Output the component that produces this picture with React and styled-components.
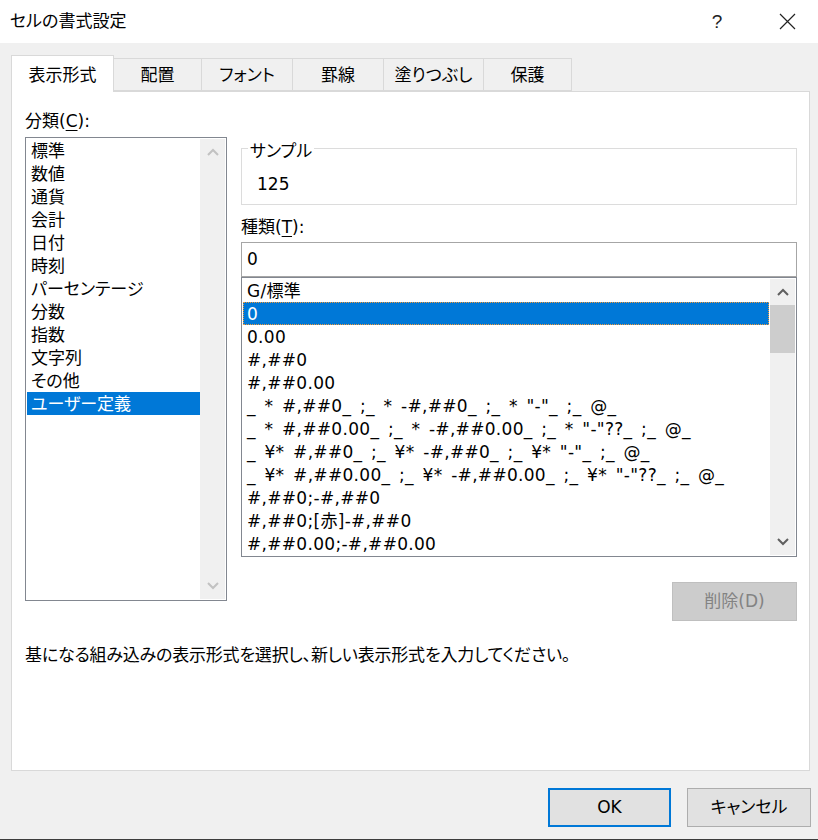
import React from "react"
import styled, { createGlobalStyle } from 'styled-components';

const GlobalStyle = createGlobalStyle`
  html, body {
    margin: 0;
    padding: 0;
    background: #f0f0f0;
  }
  body {
    font-family: "DejaVu Sans", "Noto Sans CJK JP", sans-serif;
    font-size: 17px;
    font-feature-settings: "palt";
    color: #000;
  }
  * { box-sizing: border-box; }
`

const Window = styled.div`
  width: 818px;
  height: 840px;
  display: flex;
  flex-direction: column;
  background: #f0f0f0;
  border-bottom: 1px solid #3c3c3c;
`

const TitleBar = styled.div`
  height: 43px;
  background: #fff;
  display: flex;
  align-items: center;
  padding-left: 10px;
`

const Title = styled.span`
  flex: 1;
  font-size: 17px;
  line-height: 23px;
`

const HelpButton = styled.span`
  width: 20px;
  text-align: center;
  font-family: "Liberation Sans", sans-serif;
  font-size: 19px;
  font-weight: 300;
  color: #222;
  margin-right: 52px;
`

const CloseButton = styled.span`
  display: flex;
  margin-right: 22px;
`

const Body = styled.div`
  padding: 12px 8px 0 11px;
`

const TabRow = styled.div`
  display: flex;
  align-items: flex-end;
  height: 36px;
`

const Tab = styled.div`
  position: relative;
  width: ${p => p.$w}px;
  height: ${p => (p.$active ? 37 : 33)}px;
  margin-left: ${p => (p.$first ? 0 : -1)}px;
  margin-bottom: ${p => (p.$active ? -1 : 0)}px;
  z-index: ${p => (p.$active ? 2 : 1)};
  border: 1px solid #d9d9d9;
  border-bottom: ${p => (p.$active ? 'none' : '1px solid #d9d9d9')};
  background: ${p => (p.$active ? '#fff' : '#f0f0f0')};
  display: flex;
  align-items: center;
  justify-content: center;
  padding-top: ${p => (p.$active ? 2 : 1)}px;
  line-height: 23px;
`

const Panel = styled.div`
  height: 680px;
  background: #fff;
  border: 1px solid #d9d9d9;
  padding: 18px 12px 0 13px;
`

const Columns = styled.div`
  display: flex;
  gap: 14px;
`

const LeftCol = styled.div`
  width: 202px;
  display: flex;
  flex-direction: column;
`

const RightCol = styled.div`
  width: 556px;
  padding-top: 38px;
  display: flex;
  flex-direction: column;
`

const Label = styled.div`
  line-height: 23px;
  height: 23px;
  margin-top: ${p => p.$mt || 0}px;
  margin-bottom: ${p => p.$mb || 0}px;
  u { text-decoration-thickness: 1px; text-underline-offset: 3px; }
`

const ListBox = styled.div`
  height: ${p => p.$h}px;
  border: 1px solid #828790;
  padding: 1px;
  display: flex;
  gap: ${p => p.$gap || 0}px;
  background: #fff;
`

const Items = styled.div`
  flex: 1;
  overflow: hidden;
`

const Row = styled.div`
  height: 23px;
  white-space: pre;
  background: ${p => (p.$sel ? '#0078d7' : 'transparent')};
  color: ${p => (p.$sel ? '#fff' : '#000')};
  border: ${p => (p.$focus ? '1px dotted #f09a3a' : 'none')};
  padding-left: ${p => (p.$focus ? 3 : 4)}px;
  padding-top: ${p => (p.$focus ? 1 : 2)}px;
  line-height: 21px;
`

const FormatRow = styled(Row)`
  letter-spacing: 0.3px;
  word-spacing: 3px;
`

const ScrollBar = styled.div`
  width: 25px;
  background: #f0f0f0;
  display: flex;
  flex-direction: column;
`

const Arrow = styled.div`
  height: 26px;
  display: flex;
  align-items: center;
  justify-content: center;
`

const Thumb = styled.div`
  height: 48px;
  background: #cdcdcd;
`

const Track = styled.div`
  flex: 1;
`

const Group = styled.div`
  position: relative;
  height: 57px;
  border: 1px solid #dcdcdc;
  padding: 24px 0 0 15px;
`

const Legend = styled.span`
  position: absolute;
  top: -9px;
  left: 6px;
  padding: 0 2px;
  background: #fff;
  line-height: 23px;
`

const Value = styled.div`
  line-height: 23px;
`

const TextInput = styled.div`
  height: 35px;
  border: 1px solid #a6a6a6;
  padding-left: 5px;
  line-height: 33px;
`

const Button = styled.div`
  width: ${p => p.$w}px;
  height: 39px;
  display: flex;
  align-items: center;
  justify-content: center;
  background: ${p => (p.$disabled ? '#cccccc' : '#e1e1e1')};
  color: ${p => (p.$disabled ? '#838383' : '#000')};
  border: ${p => (p.$default ? '2px solid #0078d7' : p.$disabled ? '1px solid #bfbfbf' : '1px solid #adadad')};
  line-height: 23px;
`

const DeleteButton = styled(Button)`
  align-self: flex-end;
  margin-top: 25px;
`

const Hint = styled.div`
  margin-top: 23px;
  line-height: 23px;
  letter-spacing: -0.2px;
`

const Footer = styled.div`
  display: flex;
  justify-content: flex-end;
  gap: 16px;
  padding-top: 17px;
  margin-right: -1px;
`

function Chevron({ up, color }) {
  return (
    <svg width="12" height="8" viewBox="0 0 12 8">
      <polyline
        points={up ? "1,7 6,2 11,7" : "1,1 6,6 11,1"}
        fill="none"
        stroke={color}
        strokeWidth="2"
      />
    </svg>
  )
}

const tabs = [
  { label: '表示形式', w: 103 },
  { label: '配置', w: 89 },
  { label: 'フォント', w: 92 },
  { label: '罫線', w: 92 },
  { label: '塗りつぶし', w: 101 },
  { label: '保護', w: 89 },
]

const categories = ['標準', '数値', '通貨', '会計', '日付', '時刻', 'パーセンテージ', '分数', '指数', '文字列', 'その他', 'ユーザー定義']

const formats = [
  'G/標準',
  '0',
  '0.00',
  '#,##0',
  '#,##0.00',
  '_ * #,##0_ ;_ * -#,##0_ ;_ * "-"_ ;_ @_',
  '_ * #,##0.00_ ;_ * -#,##0.00_ ;_ * "-"??_ ;_ @_',
  '_ ¥* #,##0_ ;_ ¥* -#,##0_ ;_ ¥* "-"_ ;_ @_',
  '_ ¥* #,##0.00_ ;_ ¥* -#,##0.00_ ;_ ¥* "-"??_ ;_ @_',
  '#,##0;-#,##0',
  '#,##0;[赤]-#,##0',
  '#,##0.00;-#,##0.00',
]

export default function App() {
  return (
    <Window>
      <GlobalStyle />
      <TitleBar>
        <Title>セルの書式設定</Title>
        <HelpButton>?</HelpButton>
        <CloseButton>
          <svg width="17" height="17" viewBox="0 0 17 17">
            <path d="M1 1 L16 16 M16 1 L1 16" stroke="#222" strokeWidth="1.2" fill="none" />
          </svg>
        </CloseButton>
      </TitleBar>
      <Body>
        <TabRow>
          {tabs.map((t, i) => (
            <Tab key={t.label} $w={t.w} $first={i === 0} $active={i === 0}>{t.label}</Tab>
          ))}
        </TabRow>
        <Panel>
          <Columns>
            <LeftCol>
              <Label $mb={4}>分類(<u>C</u>):</Label>
              <ListBox $h={464}>
                <Items>
                  {categories.map(c => (
                    <Row key={c} $sel={c === 'ユーザー定義'}>{c}</Row>
                  ))}
                </Items>
                <ScrollBar>
                  <Arrow><Chevron up color="#c2c2c2" /></Arrow>
                  <Track />
                  <Arrow><Chevron color="#c2c2c2" /></Arrow>
                </ScrollBar>
              </ListBox>
            </LeftCol>
            <RightCol>
              <Group>
                <Legend>サンプル</Legend>
                <Value>125</Value>
              </Group>
              <Label $mt={11} $mb={3}>種類(<u>T</u>):</Label>
              <TextInput>0</TextInput>
              <ListBox $h={280} $gap={1}>
                <Items>
                  {formats.map((f, i) => (
                    <FormatRow key={f} $sel={i === 1} $focus={i === 1}>{f}</FormatRow>
                  ))}
                </Items>
                <ScrollBar>
                  <Arrow><Chevron up color="#606060" /></Arrow>
                  <Thumb />
                  <Track />
                  <Arrow><Chevron color="#606060" /></Arrow>
                </ScrollBar>
              </ListBox>
              <DeleteButton $w={125} $disabled>削除(D)</DeleteButton>
            </RightCol>
          </Columns>
          <Hint>基になる組み込みの表示形式を選択し、新しい表示形式を入力してください。</Hint>
        </Panel>
        <Footer>
          <Button $w={123} $default>OK</Button>
          <Button $w={124}>キャンセル</Button>
        </Footer>
      </Body>
    </Window>
  )
}
